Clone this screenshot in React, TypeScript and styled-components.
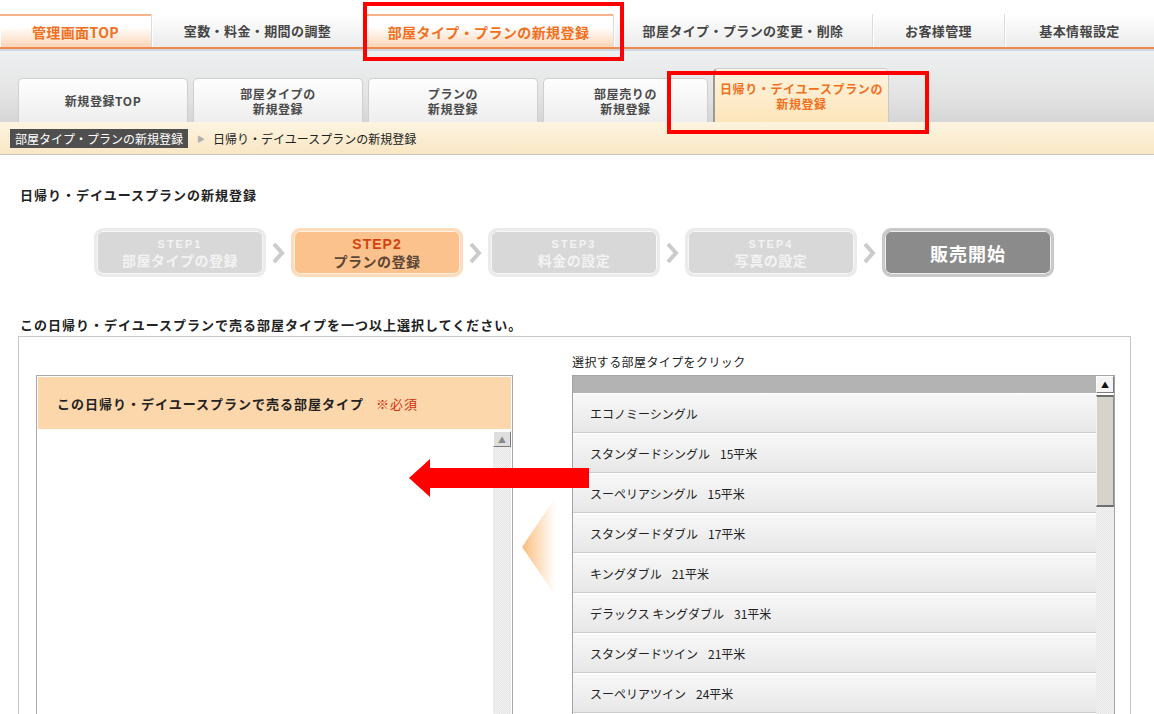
import React from 'react';
import styled, { createGlobalStyle, css } from 'styled-components';

const GlobalStyle = createGlobalStyle`
  html, body {
    margin: 0;
    padding: 0;
    background: #fff;
  }
  body {
    font-family: "Noto Sans CJK JP", "Noto Sans", sans-serif;
    color: #222;
    overflow: hidden;
  }
  * {
    box-sizing: border-box;
  }
`;

const Page = styled.div`
  position: relative;
  width: 1154px;
  height: 714px;
  overflow: hidden;
`;

const Header = styled.header`
  padding-top: 14px;
`;

const NavBar = styled.nav`
  display: flex;
  height: 35px;
  background: linear-gradient(#ffffff, #ebebeb);
  border-bottom: 2px solid #f08a4c;
`;

const NavTab = styled.div<{ $w: number; $active?: boolean }>`
  flex: none;
  width: ${({ $w }) => $w}px;
  display: flex;
  align-items: center;
  justify-content: center;
  font-size: 13px;
  font-weight: 700;
  letter-spacing: 0.4px;
  color: #454545;
  border-left: 1px solid #dcdcdc;
  box-shadow: inset 1px 0 0 #fff;

  &:first-child {
    border-left: 0;
  }

  ${({ $active }) =>
    $active &&
    css`
      color: #f0701e;
      font-size: 14px;
      background: linear-gradient(#ffffff 35%, #fcd6b8);
      border-top: 2px solid #f6b488;
    `}
`;

const SubNav = styled.div`
  display: flex;
  align-items: flex-end;
  gap: 5px;
  height: 73px;
  padding-left: 18px;
  border-top: 2px solid #cdd8e3;
  background: linear-gradient(#eef0f1, #e4e4e4 60%, #d6d6d6);
`;

const SubTab = styled.div<{ $w: number; $active?: boolean }>`
  flex: none;
  width: ${({ $w }) => $w}px;
  height: 44px;
  display: flex;
  flex-direction: column;
  align-items: center;
  justify-content: center;
  border: 1px solid #cfcfcf;
  border-bottom: 0;
  border-radius: 5px 5px 0 0;
  background: linear-gradient(#fefefe, #eeeeee);
  font-size: 12px;
  font-weight: 700;
  line-height: 15px;
  letter-spacing: 0.6px;
  color: #4a4a4a;
  text-align: center;

  ${({ $active }) =>
    $active &&
    css`
      height: 54px;
      color: #f0701e;
      background: linear-gradient(#fff4de, #fde5bb);
      border-left: 2px solid #9a9a9a;
      border-right: 1px solid #c8c8c8;
    `}
`;

const Breadcrumb = styled.div`
  display: flex;
  align-items: center;
  height: 33px;
  padding-left: 10px;
  border-bottom: 1px solid #c6c6c6;
  background: linear-gradient(#fdf4e0, #f9e7c5);
  font-size: 12px;
`;

const CrumbLabel = styled.span`
  display: inline-block;
  height: 19px;
  line-height: 19px;
  padding: 0 5px;
  background: #4f4f4f;
  color: #fff;
`;

const CrumbArrow = styled.span`
  margin: 0 8px 0 9px;
  font-size: 8px;
  color: #b0b0b0;
`;

const CrumbText = styled.span`
  color: #222;
`;

const Content = styled.main`
  padding: 0 23px 0 18px;
`;

const Title = styled.h1`
  margin: 33px 0 0 2px;
  font-size: 13px;
  line-height: 14px;
  font-weight: 700;
  letter-spacing: 1px;
  color: #222;
`;

const Steps = styled.div`
  display: flex;
  align-items: center;
  gap: 5px;
  margin: 26px 0 0 76px;
`;

const Step = styled.div<{ $variant: 'off' | 'on' | 'final' }>`
  flex: none;
  width: 172px;
  height: 49px;
  display: flex;
  flex-direction: column;
  align-items: center;
  justify-content: center;
  border-radius: 9px;
  font-weight: 700;
  text-align: center;
  ${({ $variant }) =>
    $variant === 'off'
      ? css`
          background: #d8d8d8;
          border: 3px solid #ebebeb;
          box-shadow: inset 0 0 0 1px #f7f7f7;
          color: #f3f3f3;
        `
      : $variant === 'on'
      ? css`
          background: #fcc28e;
          border: 3px solid #fcdcbd;
          box-shadow: inset 0 0 0 1px #fff1e2;
          color: #5c4634;
        `
      : css`
          background: #8b8b8b;
          border: 3px solid #c9c9c9;
          box-shadow: inset 0 0 0 1px #efefef;
          color: #fff;
        `}
`;

const StepNo = styled.span<{ $on?: boolean }>`
  font-family: "Liberation Sans", Arial, sans-serif;
  font-size: ${({ $on }) => ($on ? '14px' : '11px')};
  line-height: ${({ $on }) => ($on ? '16px' : '14px')};
  letter-spacing: ${({ $on }) => ($on ? '1px' : '2px')};
  color: ${({ $on }) => ($on ? '#d7420c' : 'inherit')};
`;

const StepName = styled.span<{ $big?: boolean }>`
  font-size: ${({ $big }) => ($big ? '18px' : '14px')};
  line-height: 18px;
  letter-spacing: ${({ $big }) => ($big ? '1px' : '0.5px')};
`;

const Instruction = styled.p`
  margin: 41px 0 0 2px;
  font-size: 13px;
  line-height: 14px;
  font-weight: 700;
  letter-spacing: 1px;
  color: #222;
`;

const Box = styled.section`
  display: flex;
  align-items: flex-start;
  height: 420px;
  margin-top: 4px;
  padding: 18px 15px 0 17px;
  border: 1px solid #c8c8c8;
`;

const LeftPanel = styled.div`
  flex: none;
  display: flex;
  flex-direction: column;
  width: 477px;
  height: 400px;
  margin-top: 20px;
  padding: 1px;
  border: 1px solid #a9a9a9;
`;

const PanelHead = styled.div`
  display: flex;
  align-items: center;
  height: 52px;
  padding-left: 19px;
  background: #fdd7ac;
  font-size: 13px;
  font-weight: 700;
  letter-spacing: 1px;
  color: #222;
`;

const Required = styled.span`
  margin-left: 12px;
  font-weight: 400;
  color: #d5300c;
`;

const PanelBody = styled.div`
  flex: 1;
  display: flex;
  padding-top: 2px;
`;

const EmptyList = styled.div`
  flex: 1;
  background: #fff;
`;

const ScrollBar = styled.div`
  flex: none;
  width: 18px;
  display: flex;
  flex-direction: column;
`;

const ScrollBtn = styled.div<{ $light?: boolean }>`
  flex: none;
  display: flex;
  align-items: center;
  justify-content: center;
  height: ${({ $light }) => ($light ? '17px' : '16px')};
  background: ${({ $light }) => ($light ? '#f4f4f4' : '#dedede')};
  border-top: 1px solid #fff;
  border-left: 1px solid #fff;
  border-right: 1px solid #7c7c7c;
  border-bottom: 1px solid #7c7c7c;
  font-size: 8px;
  color: ${({ $light }) => ($light ? '#111' : '#8a8a8a')};
`;

const Thumb = styled.div`
  flex: none;
  height: 112px;
  margin-top: 2px;
  background: #d6d3cc;
  border-top: 2px solid #6e6e6e;
  border-bottom: 2px solid #6e6e6e;
  border-left: 1px solid #f4f4f4;
  border-right: 1px solid #8c8c8c;
`;

const Track = styled.div`
  flex: 1;
  background: repeating-conic-gradient(#e4e4e4 0 25%, #f4f4f4 0 50%) 0 0 / 2px 2px;
`;

const Middle = styled.div`
  flex: none;
  width: 59px;
  padding: 143px 0 0 9px;
`;

const RightCol = styled.div`
  flex: 1;
  display: flex;
  flex-direction: column;
`;

const ListLabel = styled.div`
  height: 20px;
  font-size: 12px;
  line-height: 14px;
  letter-spacing: 0.4px;
  color: #222;
`;

const ListBox = styled.div`
  display: flex;
  height: 400px;
  border: 1px solid #a3a3a3;
`;

const Items = styled.div`
  flex: 1;
  display: flex;
  flex-direction: column;
  overflow: hidden;
`;

const ListHead = styled.div`
  flex: none;
  height: 17px;
  background: #b3b3b3;
`;

const Row = styled.div`
  flex: none;
  display: flex;
  align-items: center;
  height: 40px;
  padding-left: 17px;
  background: linear-gradient(#f8f8f8, #e7e7e7);
  border-top: 1px solid #fff;
  border-bottom: 1px solid #cdcdcd;
  font-size: 12px;
  color: #222;
`;

const Size = styled.span`
  margin-left: 10px;
`;

const Annotation = styled.div<{ $x: number; $y: number; $w: number; $h: number }>`
  position: absolute;
  left: ${({ $x }) => $x}px;
  top: ${({ $y }) => $y}px;
  width: ${({ $w }) => $w}px;
  height: ${({ $h }) => $h}px;
  border: 4px solid #ff0000;
  pointer-events: none;
`;

const ArrowMark = styled.svg`
  position: absolute;
  left: 409px;
  top: 459px;
`;

const navTabs = [
  { label: '管理画面TOP', w: 151, active: true },
  { label: '室数・料金・期間の調整', w: 212 },
  { label: '部屋タイプ・プランの新規登録', w: 250, active: true },
  { label: '部屋タイプ・プランの変更・削除', w: 259 },
  { label: 'お客様管理', w: 132 },
  { label: '基本情報設定', w: 150 },
];

const subTabs = [
  { lines: ['新規登録TOP'], w: 170 },
  { lines: ['部屋タイプの', '新規登録'], w: 170 },
  { lines: ['プランの', '新規登録'], w: 170 },
  { lines: ['部屋売りの', '新規登録'], w: 165 },
  { lines: ['日帰り・デイユースプランの', '新規登録'], w: 176, active: true },
];

const steps: { no?: string; name: string; variant: 'off' | 'on' | 'final' }[] = [
  { no: 'STEP1', name: '部屋タイプの登録', variant: 'off' },
  { no: 'STEP2', name: 'プランの登録', variant: 'on' },
  { no: 'STEP3', name: '料金の設定', variant: 'off' },
  { no: 'STEP4', name: '写真の設定', variant: 'off' },
  { name: '販売開始', variant: 'final' },
];

const rooms = [
  { name: 'エコノミーシングル' },
  { name: 'スタンダードシングル', size: '15平米' },
  { name: 'スーペリアシングル', size: '15平米' },
  { name: 'スタンダードダブル', size: '17平米' },
  { name: 'キングダブル', size: '21平米' },
  { name: 'デラックス キングダブル', size: '31平米' },
  { name: 'スタンダードツイン', size: '21平米' },
  { name: 'スーペリアツイン', size: '24平米' },
];

const Chevron = () => (
  <svg width="15" height="22" viewBox="0 0 15 22">
    <polyline points="3,2 11,11 3,20" fill="none" stroke="#cbcbcb" strokeWidth="4" />
  </svg>
);

const Pointer = () => (
  <svg width="33" height="97" viewBox="0 0 33 97">
    <defs>
      <linearGradient id="ptr" x1="0" y1="0" x2="1" y2="0">
        <stop offset="0" stopColor="#fbbd7c" />
        <stop offset="1" stopColor="#ffffff" />
      </linearGradient>
    </defs>
    <polygon points="0,49 33,0 33,97" fill="url(#ptr)" />
  </svg>
);

const App = () => {
  return (
    <Page>
      <GlobalStyle />
      <Header>
        <NavBar>
          {navTabs.map((tab) => (
            <NavTab key={tab.label} $w={tab.w} $active={tab.active}>
              {tab.label}
            </NavTab>
          ))}
        </NavBar>
        <SubNav>
          {subTabs.map((tab) => (
            <SubTab key={tab.lines.join('')} $w={tab.w} $active={tab.active}>
              {tab.lines.map((line) => (
                <span key={line}>{line}</span>
              ))}
            </SubTab>
          ))}
        </SubNav>
        <Breadcrumb>
          <CrumbLabel>部屋タイプ・プランの新規登録</CrumbLabel>
          <CrumbArrow>▶</CrumbArrow>
          <CrumbText>日帰り・デイユースプランの新規登録</CrumbText>
        </Breadcrumb>
      </Header>

      <Content>
        <Title>日帰り・デイユースプランの新規登録</Title>

        <Steps>
          {steps.map((step, i) => (
            <React.Fragment key={step.name}>
              {i > 0 && <Chevron />}
              <Step $variant={step.variant}>
                {step.no && <StepNo $on={step.variant === 'on'}>{step.no}</StepNo>}
                <StepName $big={step.variant === 'final'}>{step.name}</StepName>
              </Step>
            </React.Fragment>
          ))}
        </Steps>

        <Instruction>この日帰り・デイユースプランで売る部屋タイプを一つ以上選択してください。</Instruction>

        <Box>
          <LeftPanel>
            <PanelHead>
              この日帰り・デイユースプランで売る部屋タイプ
              <Required>※必須</Required>
            </PanelHead>
            <PanelBody>
              <EmptyList />
              <ScrollBar>
                <ScrollBtn>▲</ScrollBtn>
                <Track />
              </ScrollBar>
            </PanelBody>
          </LeftPanel>

          <Middle>
            <Pointer />
          </Middle>

          <RightCol>
            <ListLabel>選択する部屋タイプをクリック</ListLabel>
            <ListBox>
              <Items>
                <ListHead />
                {rooms.map((room) => (
                  <Row key={room.name}>
                    {room.name}
                    {room.size && <Size>{room.size}</Size>}
                  </Row>
                ))}
              </Items>
              <ScrollBar>
                <ScrollBtn $light>▲</ScrollBtn>
                <Thumb />
                <Track />
              </ScrollBar>
            </ListBox>
          </RightCol>
        </Box>
      </Content>

      <Annotation $x={363} $y={2} $w={261} $h={59} />
      <Annotation $x={667} $y={71} $w={262} $h={63} />
      <ArrowMark width="180" height="38" viewBox="0 0 180 38">
        <polygon points="0,19 21,0 21,9 180,9 180,29 21,29 21,38" fill="#ff0000" />
      </ArrowMark>
    </Page>
  );
};

export default App;
